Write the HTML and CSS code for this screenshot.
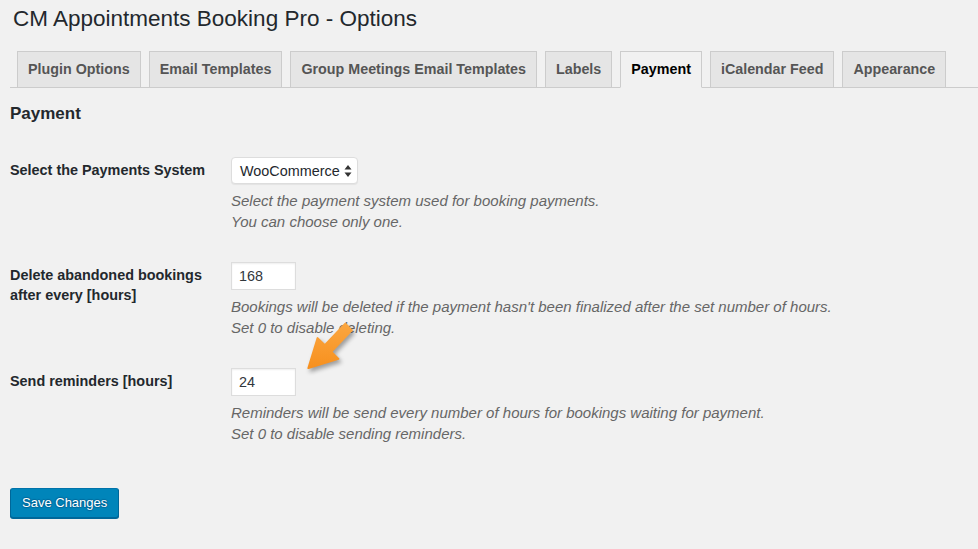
FILE: index.html
```html
<!DOCTYPE html>
<html>
<head>
<meta charset="utf-8">
<title>CM Appointments Booking Pro - Options</title>
<link rel="stylesheet" href="styles.css">
</head>
<body>
<div class="wrap">
  <h1 class="page-title">CM Appointments Booking Pro - Options</h1>
  <nav class="tabs">
    <a class="tab">Plugin Options</a>
    <a class="tab">Email Templates</a>
    <a class="tab">Group Meetings Email Templates</a>
    <a class="tab">Labels</a>
    <a class="tab active">Payment</a>
    <a class="tab">iCalendar Feed</a>
    <a class="tab">Appearance</a>
  </nav>
  <h2 class="section-title">Payment</h2>
  <table class="form-table">
    <tr>
      <th>Select the Payments System</th>
      <td>
        <div class="select">
          <span>WooCommerce</span>
          <svg class="select-arrows" width="8" height="14" viewBox="0 0 8 14"><path d="M4 1 L7.5 5.5 L0.5 5.5 Z M4 13 L7.5 8.5 L0.5 8.5 Z" fill="#333"/></svg>
        </div>
        <p class="description">Select the payment system used for booking payments.<br>You can choose only one.</p>
      </td>
    </tr>
    <tr>
      <th>Delete abandoned bookings after every [hours]</th>
      <td>
        <input class="text-input" type="text" value="168">
        <p class="description">Bookings will be deleted if the payment hasn't been finalized after the set number of hours.<br>Set 0 to disable deleting.</p>
      </td>
    </tr>
    <tr>
      <th>Send reminders [hours]</th>
      <td>
        <input class="text-input" type="text" value="24">
        <p class="description">Reminders will be send every number of hours for bookings waiting for payment.<br>Set 0 to disable sending reminders.</p>
      </td>
    </tr>
  </table>
  <div class="submit"><button class="button-primary">Save Changes</button></div>
</div>
<svg class="arrow" width="75" height="65" viewBox="0 0 75 65">
  <defs>
    <linearGradient id="ag" x1="0" y1="0" x2="0" y2="1">
      <stop offset="0" stop-color="#fba640"/>
      <stop offset="1" stop-color="#f7901e"/>
    </linearGradient>
  </defs>
  <polygon points="55.3,8.8 61.7,15.2 41.2,36.7 48.4,43.9 18.4,53.1 27.6,23.1 34.8,30.3" fill="url(#ag)" stroke="url(#ag)" stroke-width="2" stroke-linejoin="round"/>
</svg>
</body>
</html>
```

FILE: styles.css
```css
body {
  margin: 0;
  background: #f1f1f1;
  font-family: "Liberation Sans", Arial, sans-serif;
  color: #23282d;
  font-size: 14px;
  position: relative;
  min-height: 549px;
}

.wrap {
  padding-left: 10px;
}

.page-title {
  font-size: 22.5px;
  font-weight: 400;
  line-height: 29px;
  margin: 0 0 0 3px;
  padding-top: 4px;
}

.tabs {
  display: flex;
  gap: 8px;
  padding-left: 7px;
  margin-top: 18px;
  border-bottom: 1px solid #ccc;
}

.tab {
  border: 1px solid #ccc;
  background: #e5e5e5;
  color: #555;
  font-weight: bold;
  font-size: 14.3px;
  line-height: 24px;
  padding: 5px 10px 6px;
  margin-bottom: -1px;
  white-space: nowrap;
}

.tab.active {
  background: #f1f1f1;
  color: #000;
  border-bottom-color: #f1f1f1;
}

.section-title {
  font-size: 17px;
  font-weight: bold;
  line-height: 22px;
  margin: 15px 0 0;
}

.form-table {
  margin-top: 17px;
  border-collapse: collapse;
  border-spacing: 0;
}

.form-table th {
  width: 201px;
  padding: 19px 10px 20px 0;
  text-align: left;
  vertical-align: top;
  line-height: 19.5px;
  font-weight: bold;
  font-size: 14.4px;
  color: #23282d;
}

.form-table td {
  padding: 15px 10px;
  vertical-align: top;
}

.select {
  display: inline-flex;
  align-items: center;
  height: 27px;
  box-sizing: border-box;
  padding: 0 5px 0 8px;
  background: #fff;
  border: 1px solid #ddd;
  border-radius: 4px;
  box-shadow: 0 1px 1px rgba(0,0,0,0.06);
  color: #23282d;
  font-size: 14.4px;
  gap: 4px;
}

.select-arrows {
  display: block;
  width: 8px;
  height: 14px;
}

.text-input {
  display: block;
  width: 65px;
  height: 28px;
  box-sizing: border-box;
  margin: 0;
  padding: 0 7px;
  border: 1px solid #ddd;
  box-shadow: inset 0 1px 2px rgba(0,0,0,0.07);
  background: #fff;
  color: #32373c;
  font-family: "Liberation Sans", Arial, sans-serif;
  font-size: 14.4px;
  outline: none;
}

.description {
  margin: 6px 0 0;
  font-style: italic;
  color: #666;
  font-size: 15px;
  line-height: 21px;
}

.submit {
  margin-top: 29px;
}

.button-primary {
  height: 30px;
  line-height: 28px;
  padding: 0 11px 1px;
  font-family: "Liberation Sans", Arial, sans-serif;
  font-size: 13px;
  color: #fff;
  background: #0085ba;
  border: 1px solid #0073aa;
  border-color: #0073aa #006799 #006799;
  border-radius: 3px;
  box-shadow: 0 1px 0 #006799;
  text-shadow: 0 -1px 1px #006799, 1px 0 1px #006799, 0 1px 1px #006799, -1px 0 1px #006799;
  cursor: pointer;
}

.arrow {
  position: absolute;
  left: 290px;
  top: 315px;
  filter: drop-shadow(2px 3px 2px rgba(0,0,0,0.35));
}
```
